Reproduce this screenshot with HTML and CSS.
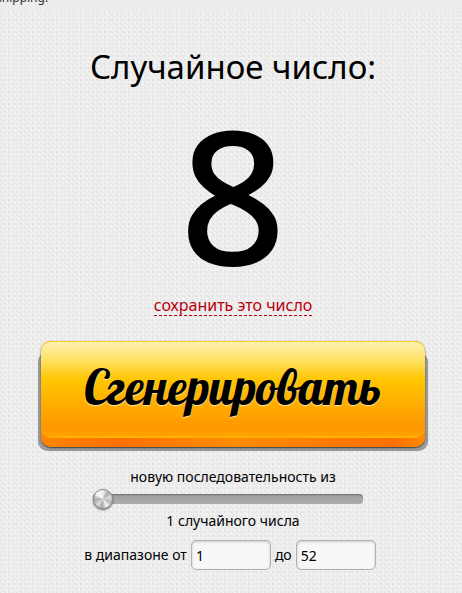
FILE: index.html
```html
<!DOCTYPE html>
<html lang="ru">
<head>
  <meta charset="UTF-8">
  <meta name="viewport" content="width=device-width, initial-scale=1.0">
  <title>Случайное число</title>
  <link rel="stylesheet" href="styles.css">
</head>
<body>

  <header class="topbar">
    <p>shipping.</p>
  </header>

  <main class="generator">
    <h1>Случайное число:</h1>
    <output class="number" id="number" for="from to">8</output>
    <a class="save" href="#save">сохранить это число</a>

    <form class="form" id="generatorForm">
      <div class="button-base">
        <button type="submit"><span class="face">Сгенерировать</span></button>
      </div>

      <label class="caption" for="count">новую последовательность из</label>
      <input type="range" id="count" name="count" min="1" max="20" value="1">
      <p class="count">1 случайного числа</p>

      <div class="range">
        <label for="from">в диапазоне от</label>
        <input type="text" id="from" name="from" value="1">
        <label for="to">до</label>
        <input type="text" id="to" name="to" value="52">
      </div>
    </form>
  </main>

</body>
</html>
```
FILE: styles.css
```css
* { margin: 0; padding: 0; box-sizing: border-box; }

body {
  font-family: Tahoma, "Noto Sans", sans-serif;
  font-size: 14px;
  line-height: 20px;
  color: #000;
  min-height: 100vh;
  display: flex;
  flex-direction: column;
  background: #ececec;
}

.topbar {
  height: 11px;
  overflow: hidden;
  font-size: 12px;
  color: #333;
}

.topbar p {
  margin: -12px 0 0 -4px;
}

/* fabric texture */
.generator {
  flex: 1;
  display: flex;
  flex-direction: column;
  align-items: center;
  padding: 32px 34px 20px 38px;
  background-color: #f0f0f0;
  background-image:
    radial-gradient(circle at 1px 1px, #d2d2d2 0, transparent 1px),
    radial-gradient(circle at 3px 3px, #dadada 0, transparent 1px),
    repeating-linear-gradient(45deg, #ebebeb 0, #f4f4f4 2px, #ebebeb 4px);
  background-size: 4px 4px, 6px 6px, auto;
}

h1 {
  font-size: 33px;
  line-height: 48px;
  font-weight: normal;
}

.number {
  font-size: 186px;
  line-height: 204px;
  font-weight: 500;
}

.save {
  font-size: 16px;
  line-height: 20px;
  color: #b8000c;
  text-decoration: none;
  border-bottom: 1px dashed #b8000c;
}

.form {
  width: 100%;
  max-width: 390px;
  margin-top: 25px;
  display: flex;
  flex-direction: column;
  align-items: center;
}

/* big orange button on a grey base */
.button-base {
  position: relative;
  width: 100%;
  padding: 0 3px 4px;
}

.button-base::before {
  content: "";
  position: absolute;
  inset: 11px 0 0;
  border-radius: 10px;
  background: #a3a3a3;
  box-shadow: inset 0 0 2px #777;
}

button {
  position: relative;
  display: block;
  width: 100%;
  padding-bottom: 9px;
  border: none;
  border-radius: 10px;
  background: linear-gradient(90deg, #ff8500, #ff7000 20%, #ff8c00 50%, #ff7000 92%, #ff8c00);
  box-shadow: 0 1px 2px #333;
  color: #000;
  cursor: pointer;
}

.face {
  display: block;
  height: 97px;
  border-top: 1px solid #f5cf1c;
  border-bottom: 2px solid #ffb000;
  border-radius: 10px;
  background: linear-gradient(#fff0b0, #ffe060 20%, #ffc600 40%, #ffae00 65%, #ff9800 90%, #ffa200);
  font-family: Lobster, "Liberation Serif", serif;
  font-size: 48px;
  line-height: 90px;
  text-shadow: 0 1px 1px #ffe9a0;
}

.caption {
  margin-top: 16px;
}

input[type="range"] {
  -webkit-appearance: none;
  appearance: none;
  width: 270px;
  height: 20px;
  margin: 2px 10px 2px 0;
  background: none;
}

input[type="range"]::-webkit-slider-runnable-track {
  height: 10px;
  border-radius: 4px;
  background: linear-gradient(#8a8a8a, #a3a3a3 30%, #adadad);
  box-shadow: inset 0 1px 1px #777;
}

input[type="range"]::-webkit-slider-thumb {
  -webkit-appearance: none;
  width: 20px;
  height: 20px;
  margin-top: -5px;
  border: 1px solid #8c8c8c;
  border-radius: 50%;
  background: conic-gradient(#eee, #aaa 12%, #ddd 20%, #bbb 32%, #f5f5f5 42%, #a8a8a8 52%, #ddd 62%, #aaa 74%, #f8f8f8 86%, #eee);
  box-shadow: 0 1px 2px #555;
}

.range {
  display: flex;
  align-items: center;
  gap: 4px;
  margin: 9px 6px 0 0;
}

input[type="text"] {
  width: 80px;
  height: 30px;
  padding: 0 4px;
  border: 1px solid #b0b0b0;
  border-radius: 5px;
  background: #f8f8f8;
  box-shadow: inset 0 1px 3px #ccc;
  font: inherit;
}
```
